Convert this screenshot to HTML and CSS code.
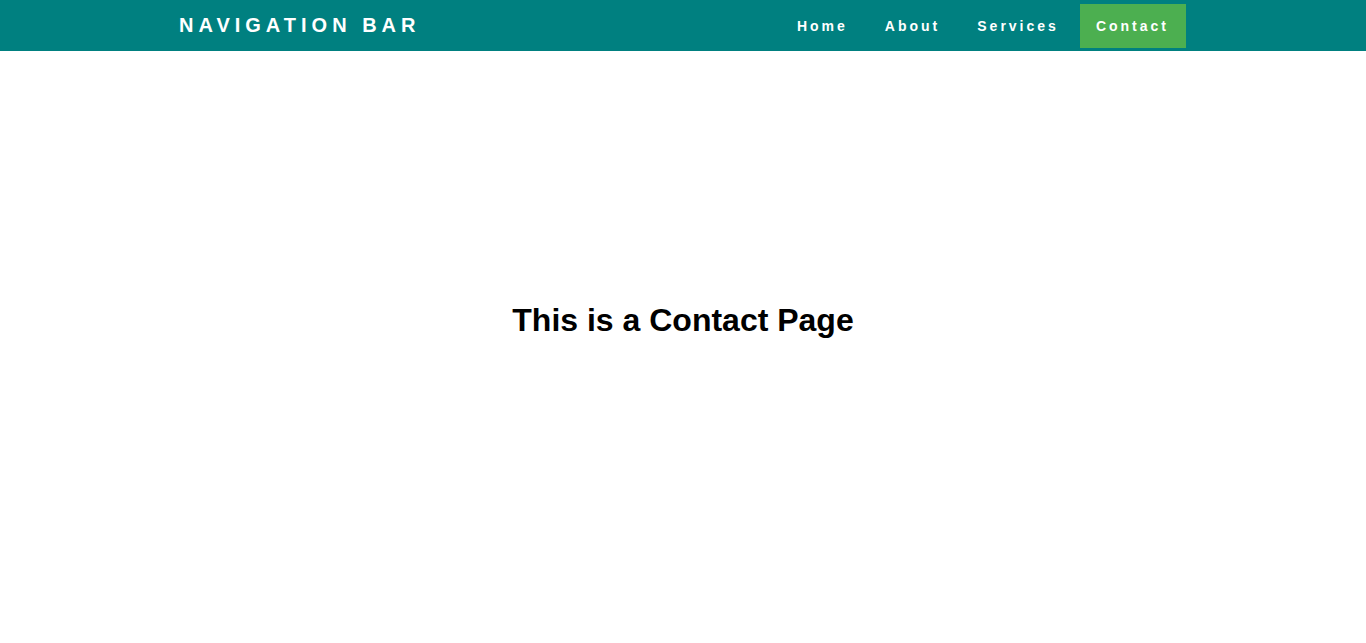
FILE: index.html
```html
<!DOCTYPE html>
<html lang="en">
<head>
<meta charset="utf-8">
<title>Contact</title>
<link rel="stylesheet" href="styles.css">
</head>
<body>
<header class="navbar">
  <div class="container">
    <div class="logo">NAVIGATION BAR</div>
    <nav class="menu">
      <a href="#" class="menu-link">Home</a>
      <a href="#" class="menu-link">About</a>
      <a href="#" class="menu-link">Services</a>
      <a href="#" class="menu-link active">Contact</a>
    </nav>
  </div>
</header>
<main class="content">
  <h1 class="title">This is a Contact Page</h1>
</main>
</body>
</html>
```

FILE: styles.css
```css
* { box-sizing: border-box; }
body {
  margin: 0;
  font-family: "Liberation Sans", Arial, sans-serif;
  background: #fff;
  color: #000;
}
.navbar {
  background: #008080;
  height: 51px;
}
.container {
  width: 1024px;
  margin: 0 auto;
  padding: 0 9px 0 8px;
  height: 100%;
  display: flex;
  align-items: center;
  justify-content: space-between;
}
.logo {
  color: #fff;
  font-size: 20px;
  font-weight: bold;
  letter-spacing: 5px;
}
.menu {
  display: flex;
  gap: 4px;
  align-items: center;
}
.menu-link {
  color: #fff;
  text-decoration: none;
  font-size: 14px;
  font-weight: bold;
  letter-spacing: 3px;
  line-height: 16px;
  padding: 14px 17px 14px 16px;
}
.menu-link.active {
  background: #4caf50;
}
.content {
  padding-top: 251px;
  text-align: center;
}
.title {
  margin: 0;
  font-size: 32px;
  font-weight: bold;
}
```
